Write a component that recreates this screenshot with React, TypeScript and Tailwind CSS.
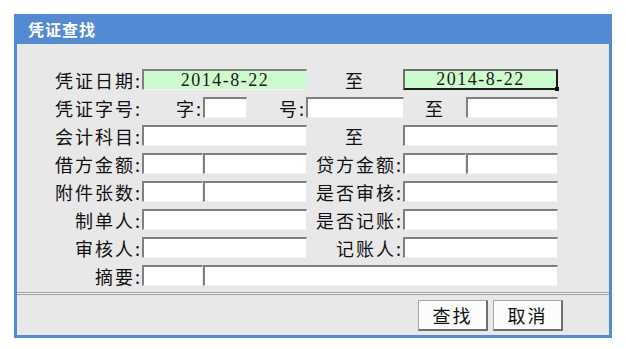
import type { ReactNode } from "react";

const cjk = "font-['Noto_Sans_CJK_SC','Noto_Sans',sans-serif]";

function Box({ w, green, focus, children }: { w: string; green?: boolean; focus?: boolean; children?: ReactNode }) {
  if (focus) {
    return (
      <div className={`relative ${w} h-[21px] border-2 border-t-[#6e6e6e] border-l-[#6e6e6e] border-r-[#1c1c1c] border-b-[#1c1c1c] bg-[#ccfccc] flex items-center justify-center font-['Liberation_Serif',serif] text-[18px] tracking-[1.5px] text-[#1a1a1a]`}>
        {children}
        <span className="absolute -right-[3px] -bottom-[3px] h-[4px] w-[4px] bg-[#111]" />
      </div>
    );
  }
  return (
    <div
      className={`${w} h-[21px] border-t-2 border-l-2 border-r border-b border-t-[#7f7f7f] border-l-[#7f7f7f] border-r-[#e6e6f2] border-b-[#f2f2f2] ${
        green ? "bg-[#ccfccc]" : "bg-white"
      } flex items-center justify-center font-['Liberation_Serif',serif] text-[18px] tracking-[1.5px] text-[#1a1a1a]`}
    >
      {children}
    </div>
  );
}

function Label({ w, center, children }: { w: string; center?: boolean; children: ReactNode }) {
  return (
    <div className={`${w} h-[21px] flex items-center ${center ? "justify-center" : "justify-end pr-[0px]"} text-[18px] tracking-[2px] leading-none`}>
      {children}
    </div>
  );
}

function Row({ label, children }: { label: string; children: ReactNode }) {
  return (
    <div className="flex h-[21px]">
      <Label w="w-[125px]">{label}</Label>
      {children}
    </div>
  );
}

function Left({ split }: { split?: boolean }) {
  return split ? (
    <>
      <Box w="w-[61px]" />
      <Box w="w-[104px]" />
    </>
  ) : (
    <Box w="w-[165px]" />
  );
}

function Right({ split }: { split?: boolean }) {
  return split ? (
    <>
      <Box w="w-[63px]" />
      <Box w="w-[92px]" />
    </>
  ) : (
    <Box w="w-[155px]" />
  );
}

export default function App() {
  return (
    <div className={`min-h-[349px] w-[626px] bg-white pt-[14px] pl-[14px] ${cjk} text-[#111]`}>
      <div className="w-[598px] bg-[#5489d4] px-[3px] pb-[3px]">
        <div className="flex h-[30px] items-center pl-[11px] text-[16px] font-bold tracking-[1px] text-white">凭证查找</div>
        <div className="bg-[#e8e8e8]">
          <div className="flex h-[248px] flex-col gap-[7px] pt-[25px]">
            <Row label="凭证日期:">
              <Box w="w-[165px]" green>2014-8-22</Box>
              <Label w="w-[96px]" center>至</Label>
              <Box w="w-[155px]" focus>2014-8-22</Box>
            </Row>
            <Row label="凭证字号:">
              <Label w="w-[61px]">字:</Label>
              <Box w="w-[44px]" />
              <Label w="w-[59px]">号:</Label>
              <Box w="w-[98px]" />
              <Label w="w-[62px]" center>至</Label>
              <Box w="w-[92px]" />
            </Row>
            <Row label="会计科目:">
              <Left />
              <Label w="w-[96px]" center>至</Label>
              <Right />
            </Row>
            <Row label="借方金额:">
              <Left split />
              <Label w="w-[96px]">贷方金额:</Label>
              <Right split />
            </Row>
            <Row label="附件张数:">
              <Left split />
              <Label w="w-[96px]">是否审核:</Label>
              <Right />
            </Row>
            <Row label="制单人:">
              <Left />
              <Label w="w-[96px]">是否记账:</Label>
              <Right />
            </Row>
            <Row label="审核人:">
              <Left />
              <Label w="w-[96px]">记账人:</Label>
              <Right />
            </Row>
            <Row label="摘要:">
              <Box w="w-[61px]" />
              <Box w="w-[355px]" />
            </Row>
          </div>
          <div className="h-[3px] border-y border-[#a0a0a0] bg-[#f4f4f4]" />
          <div className="flex h-[40px] justify-end gap-[5px] pt-[5px] pr-[46px]">
            {["查找", "取消"].map((t) => (
              <button
                key={t}
                className="h-[31px] w-[70px] border border-[#a8a8a8] border-r-2 border-b-2 border-r-[#707070] border-b-[#707070] bg-[#fcfcfc] text-[18px] tracking-[2px] leading-none"
              >
                {t}
              </button>
            ))}
          </div>
        </div>
      </div>
    </div>
  );
}
